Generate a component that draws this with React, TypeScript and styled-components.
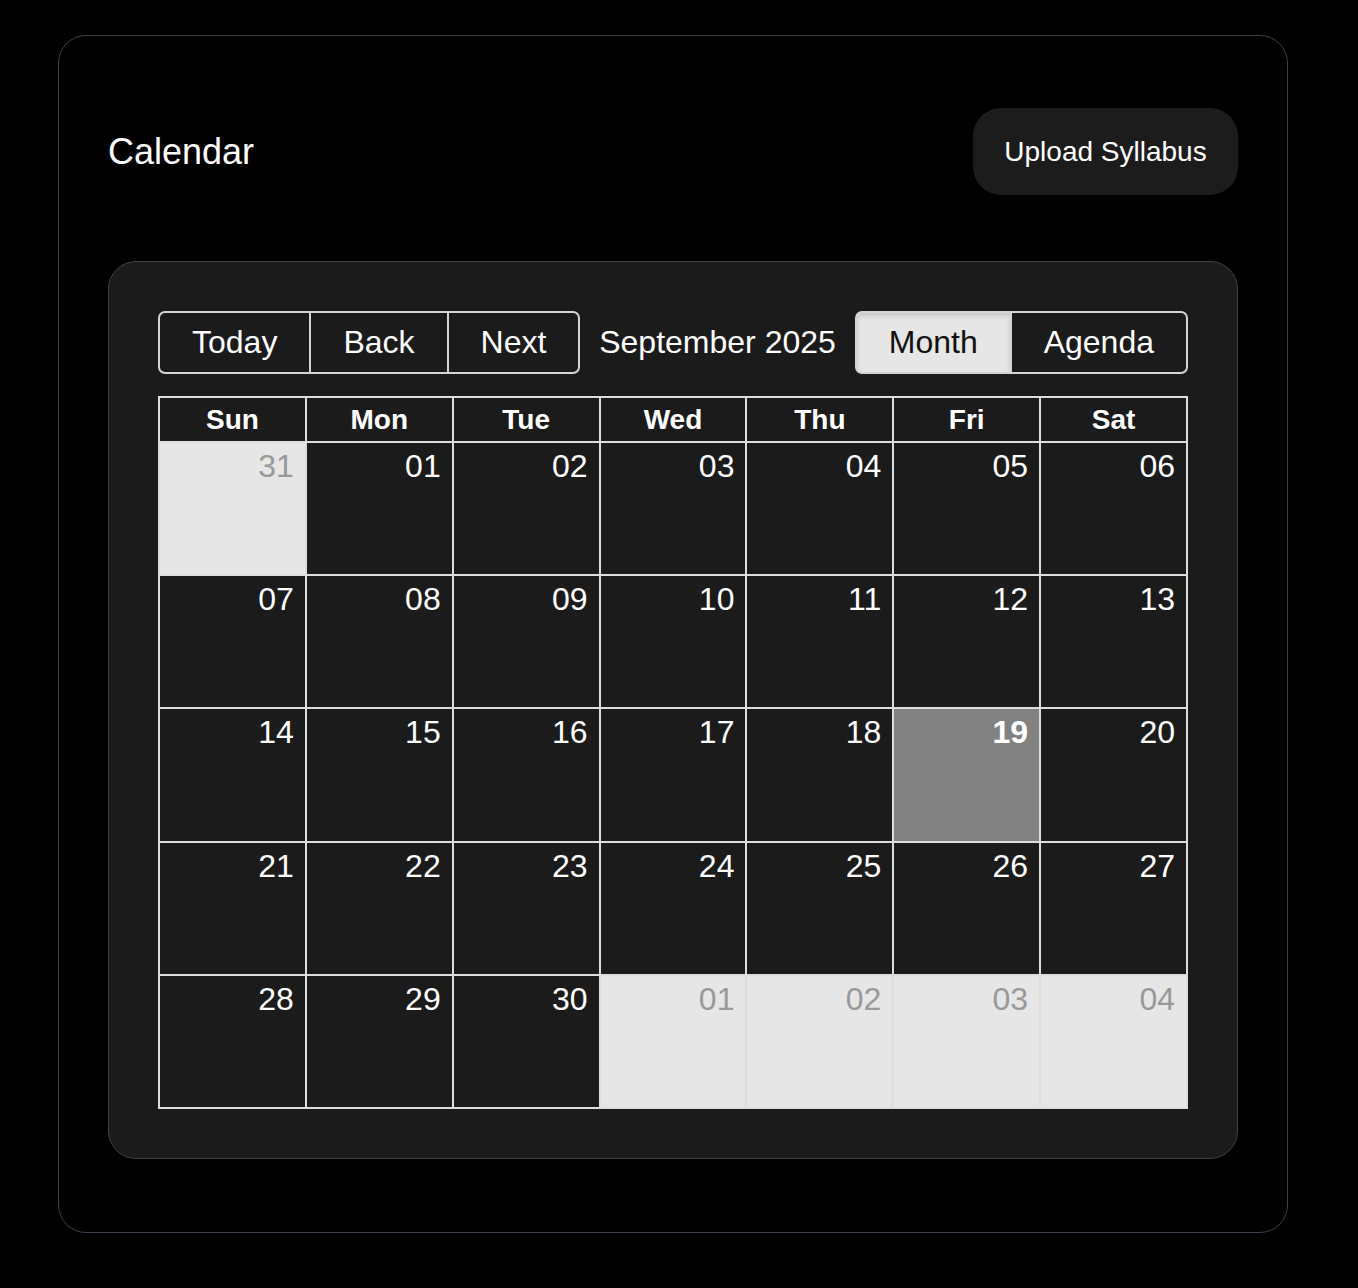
import React from "react";
import styled, { createGlobalStyle, css } from "styled-components";

const GlobalStyle = createGlobalStyle`
    html, body {
        margin: 0;
        padding: 0;
        background: #000;
    }
    body {
        font-family: "Liberation Sans", Arial, sans-serif;
        color: #fff;
    }
    * {
        box-sizing: border-box;
    }
`;

const Page = styled.div`
    padding: 35px 70px 55px 58px;
`;

const Card = styled.section`
    width: 1230px;
    border: 1px solid #3d404c;
    border-radius: 28px;
    padding: 72px 49px 73px 49px;
    background: #000;
`;

const Header = styled.header`
    display: flex;
    align-items: center;
    justify-content: space-between;
    height: 87px;
    margin-bottom: 66px;
`;

const Title = styled.h1`
    margin: 0;
    font-size: 36px;
    font-weight: 400;
    color: #fff;
`;

const UploadButton = styled.button`
    height: 87px;
    width: 265px;
    border: none;
    border-radius: 28px;
    background: #1d1c1c;
    color: #fff;
    font-family: inherit;
    font-size: 28px;
    cursor: pointer;
`;

const Panel = styled.div`
    border: 1px solid #3d404c;
    border-radius: 28px;
    background: #1c1b1b;
    padding: 49px;
`;

const Toolbar = styled.div`
    display: flex;
    align-items: center;
    height: 63px;
    margin-bottom: 22px;
`;

const ButtonGroup = styled.div`
    display: flex;
    height: 63px;
`;

const ToolButton = styled.button<{ $active?: boolean }>`
    height: 100%;
    padding: 0 32px;
    border: 2px solid #d4d4d4;
    border-left-width: 0;
    background: transparent;
    color: #fff;
    font-family: inherit;
    font-size: 32px;
    cursor: pointer;

    &:first-child {
        border-left-width: 2px;
        border-radius: 7px 0 0 7px;
    }
    &:last-child {
        border-radius: 0 7px 7px 0;
    }

    ${props => props.$active && css`
        background: #e6e6e6;
        color: #111;
        box-shadow: inset 0 3px 5px rgba(0, 0, 0, 0.125);
    `}
`;

const Label = styled.span`
    flex: 1;
    text-align: center;
    font-size: 32px;
    color: #fff;
`;

const MonthView = styled.div`
    display: flex;
    flex-direction: column;
    height: 713px;
    border: 2px solid #dddddd;
    border-left: none;
`;

const HeaderRow = styled.div`
    display: grid;
    grid-template-columns: repeat(7, 1fr);
    height: 43px;
    flex: none;
`;

const HeaderCell = styled.div`
    display: flex;
    align-items: center;
    justify-content: center;
    font-size: 28px;
    font-weight: 700;
    border-left: 2px solid #dddddd;
`;

const WeekRow = styled.div`
    flex: 1;
    display: grid;
    grid-template-columns: repeat(7, 1fr);
    border-top: 2px solid #dddddd;
`;

const DayCell = styled.div<{ $off?: boolean; $today?: boolean }>`
    border-left: 2px solid #dddddd;
    padding: 6px 11px 0 0;
    text-align: right;
    font-size: 32px;
    line-height: 34px;
    color: #fff;
    background: #1c1b1b;

    ${props => props.$off && css`
        background: #e6e6e6;
        color: #999;
    `}

    ${props => props.$today && css`
        background: #828282;
        font-weight: 700;
    `}
`;

const days = ["Sun", "Mon", "Tue", "Wed", "Thu", "Fri", "Sat"];

type Day = { label: string; off?: boolean; today?: boolean };

function buildWeeks(): Day[][] {
    const cells: Day[] = [{ label: "31", off: true }];
    for (let d = 1; d <= 30; d++) {
        cells.push({ label: String(d).padStart(2, "0"), today: d === 19 });
    }
    for (let d = 1; d <= 4; d++) {
        cells.push({ label: String(d).padStart(2, "0"), off: true });
    }
    const weeks: Day[][] = [];
    for (let i = 0; i < cells.length; i += 7) {
        weeks.push(cells.slice(i, i + 7));
    }
    return weeks;
}

export default function App() {
    const weeks = buildWeeks();
    return (
        <>
            <GlobalStyle />
            <Page>
                <Card>
                    <Header>
                        <Title>Calendar</Title>
                        <UploadButton>Upload Syllabus</UploadButton>
                    </Header>
                    <Panel>
                        <Toolbar>
                            <ButtonGroup>
                                <ToolButton>Today</ToolButton>
                                <ToolButton>Back</ToolButton>
                                <ToolButton>Next</ToolButton>
                            </ButtonGroup>
                            <Label>September 2025</Label>
                            <ButtonGroup>
                                <ToolButton $active>Month</ToolButton>
                                <ToolButton>Agenda</ToolButton>
                            </ButtonGroup>
                        </Toolbar>
                        <MonthView>
                            <HeaderRow>
                                {days.map(day => (
                                    <HeaderCell key={day}>{day}</HeaderCell>
                                ))}
                            </HeaderRow>
                            {weeks.map((week, weekIndex) => (
                                <WeekRow key={weekIndex}>
                                    {week.map((day, dayIndex) => (
                                        <DayCell key={dayIndex} $off={day.off} $today={day.today}>
                                            {day.label}
                                        </DayCell>
                                    ))}
                                </WeekRow>
                            ))}
                        </MonthView>
                    </Panel>
                </Card>
            </Page>
        </>
    );
}
